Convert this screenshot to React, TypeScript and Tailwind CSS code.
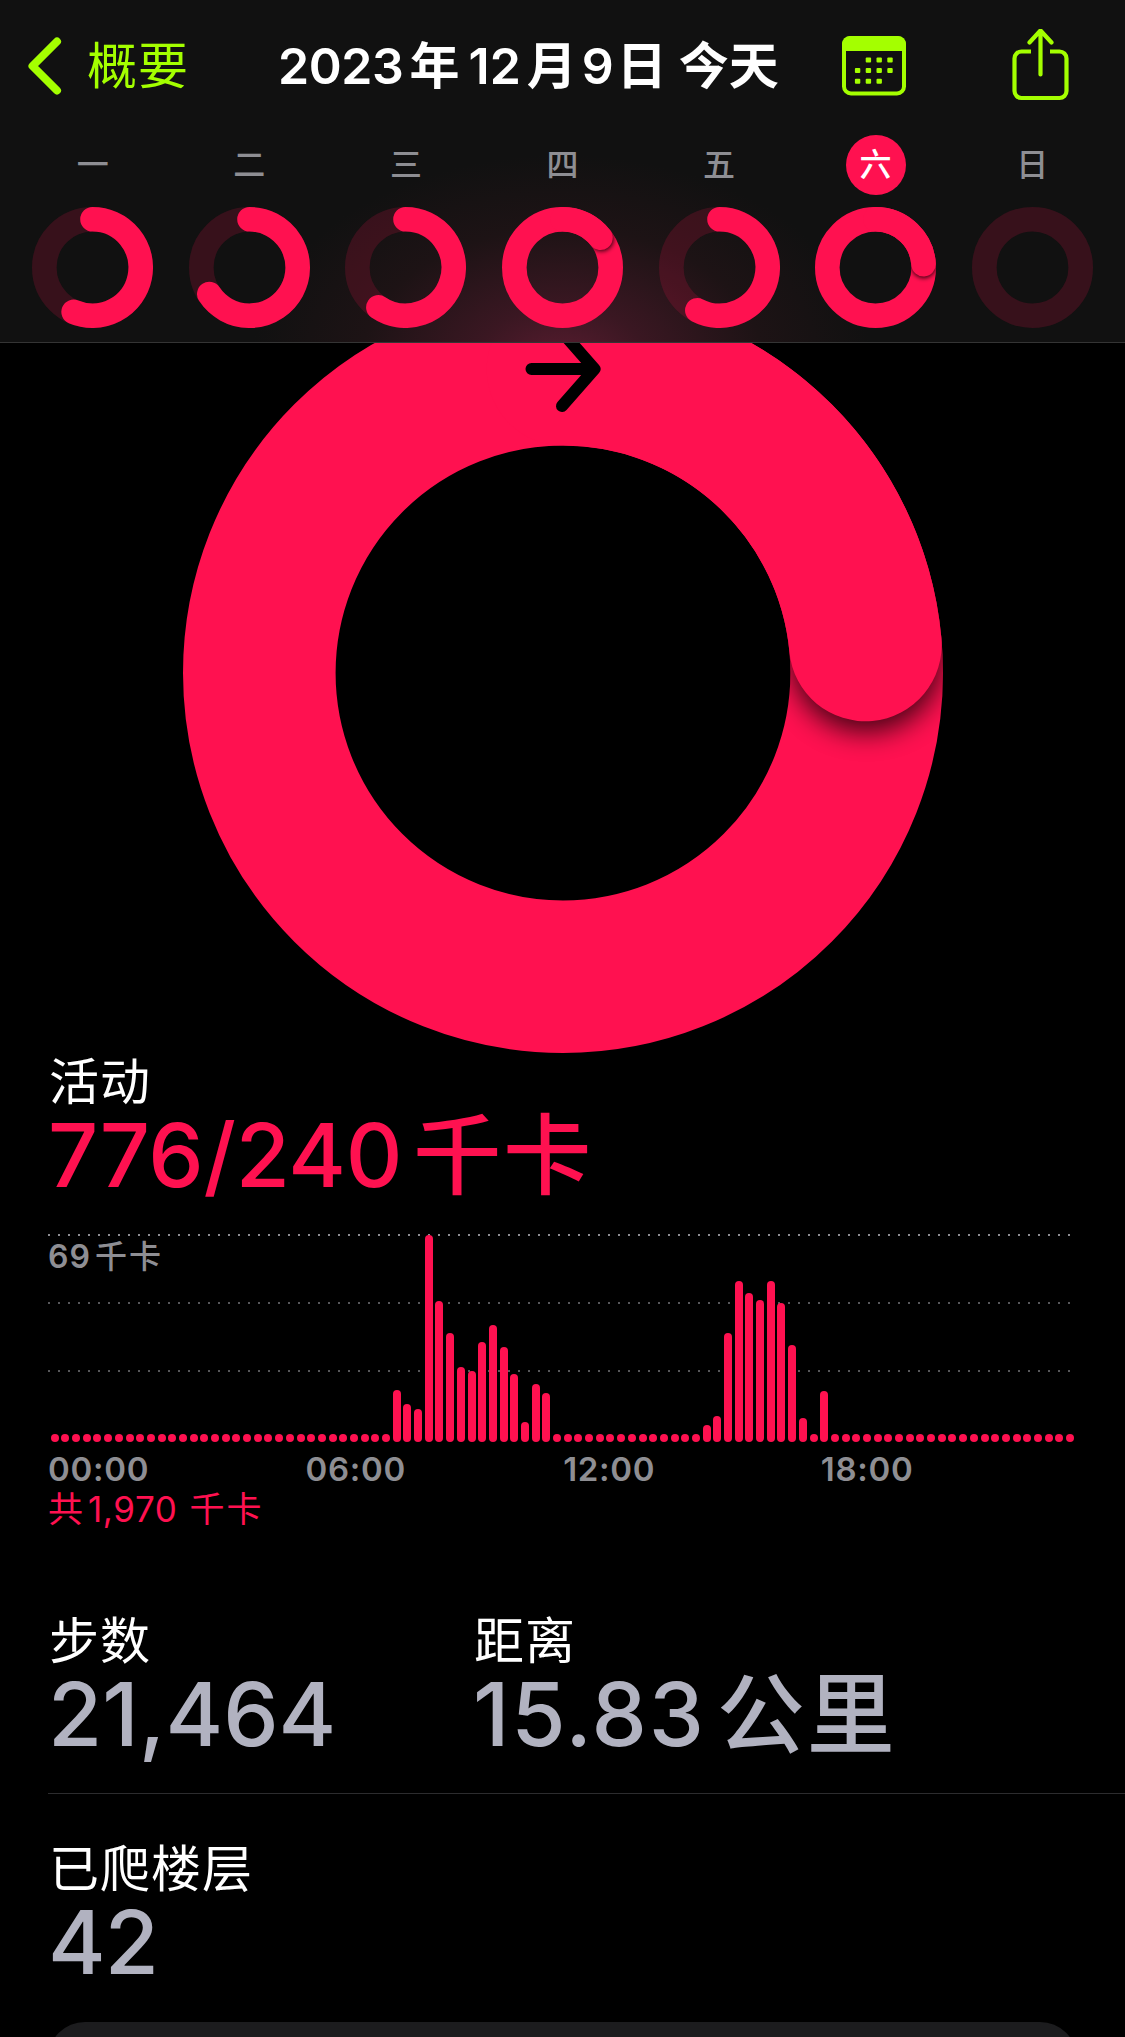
import React from 'react'

const PINK = '#ff1150'

const days = [
  { label: '一', progress: 0.564 },
  { label: '二', progress: 0.657 },
  { label: '三', progress: 0.595 },
  { label: '四', progress: 1.144 },
  { label: '五', progress: 0.576 },
  { label: '六', progress: 1.239, today: true },
  { label: '日', progress: 0 },
]

// one bar per 15 minutes, height in px
const bars: number[] = [
  ...Array(32).fill(8),
  52, 38, 33, 207, 141, 109, 75, 71, 100, 117, 95, 68, 20, 58, 49,
  ...Array(14).fill(8),
  17, 26, 109, 161, 149, 142, 161, 139, 97, 24, 8, 51,
  ...Array(23).fill(8),
]

const hours = ['00:00', '06:00', '12:00', '18:00']

type RingProps = {
  id: string
  size: number
  stroke: number
  progress: number
  className?: string
  children?: React.ReactNode
}

const Ring = ({ id, size, stroke, progress, className, children }: RingProps) => {
  const c = size / 2
  const r = (size - stroke) / 2
  const full = progress >= 1
  const angle = (progress % 1) * Math.PI * 2
  const x = c + r * Math.sin(angle)
  const y = c - r * Math.cos(angle)
  const large = angle > Math.PI ? 1 : 0

  return (
    <svg className={className} width={size} height={size} viewBox={`0 0 ${size} ${size}`} aria-hidden="true">
      <circle cx={c} cy={c} r={r} fill="none" stroke={PINK} strokeWidth={stroke} opacity={full ? 1 : 0.16} />
      {full && (
        <>
          <defs>
            <mask id={`${id}-mask`} maskUnits="userSpaceOnUse" x="0" y="0" width={size} height={size}>
              <circle cx={c} cy={c} r={r} fill="none" stroke="#fff" strokeWidth={stroke} />
            </mask>
            <filter id={`${id}-blur`} x="-50%" y="-50%" width="200%" height="200%">
              <feGaussianBlur stdDeviation={stroke * 0.09} />
            </filter>
          </defs>
          <g mask={`url(#${id}-mask)`}>
            <circle
              cx={x + Math.cos(angle) * stroke * 0.07}
              cy={y + Math.sin(angle) * stroke * 0.07}
              r={stroke / 2}
              fill="#000"
              opacity="0.75"
              filter={`url(#${id}-blur)`}
            />
          </g>
        </>
      )}
      {progress > 0 && (
        <path
          d={`M${c} ${stroke / 2}A${r} ${r} 0 ${large} 1 ${x} ${y}`}
          fill="none"
          stroke={PINK}
          strokeWidth={stroke}
          strokeLinecap="round"
        />
      )}
      {children}
    </svg>
  )
}

const CalendarIcon = () => (
  <svg width="64" height="60" viewBox="0 0 64 60" aria-hidden="true">
    <rect x="2" y="2" width="60" height="55.5" rx="7" fill="none" stroke="#a4ff00" strokeWidth="4" />
    <path d="M0 15V8a8 8 0 0 1 8-8h48a8 8 0 0 1 8 8v7z" fill="#a4ff00" />
    <g fill="#a4ff00">
      {[[26.4, 24], [37.2, 24], [48, 24], [15.6, 34.6], [26.4, 34.6], [37.2, 34.6], [48, 34.6], [15.6, 45.2], [26.4, 45.2], [37.2, 45.2]].map(([x, y]) => (
        <rect key={`${x}-${y}`} x={x - 2.7} y={y - 2.5} width="5.4" height="5" rx="1" />
      ))}
    </g>
  </svg>
)

const ShareIcon = () => (
  <svg width="58" height="74" viewBox="0 0 58 74" fill="none" stroke="#a4ff00" strokeWidth="4.2" aria-hidden="true">
    <path d="M19 22.5H9.500a7 7 0 0 0-7 7V62a7 7 0 0 0 7 7h38a7 7 0 0 0 7-7V29.500a7 7 0 0 0-7-7H38" />
    <path d="M28.500 45.500V2.500M17.500 13.500L28.500 1.500L39.500 13.500" strokeLinecap="round" strokeLinejoin="round" />
  </svg>
)

const Header = () => (
  <header className="relative z-10 h-[343px] border-b border-white/15 bg-[#111111] bg-[radial-gradient(ellipse_310px_210px_at_562px_365px,#5a1c30_0%,#3a1722_28%,#1d1315_65%,#111111_100%)]">
    <div className="flex h-[132px] items-center pl-7">
      <svg width="34" height="58" viewBox="0 0 34 58" aria-hidden="true">
        <path d="M29 4.500L4.500 29L29 53.500" fill="none" stroke="#a4ff00" strokeWidth="8" strokeLinecap="round" strokeLinejoin="round" />
      </svg>
      <span className="ml-[25px] w-[191px] text-[50px] leading-none tracking-[1px] text-[#a4ff00]">概要</span>
      <h1 className="flex w-[564px] items-center text-[50px] leading-none font-semibold whitespace-nowrap text-white">
        <span className="tracking-[-0.4px]">2023</span>
        <span className="ml-[6px]">年</span>
        <span className="ml-[9px]">12</span>
        <span className="ml-[6px]">月</span>
        <span className="ml-[5px]">9</span>
        <span className="ml-[3px]">日</span>
        <span className="ml-3">今天</span>
      </h1>
      <CalendarIcon />
      <div className="ml-[106px]">
        <ShareIcon />
      </div>
    </div>

    <div className="mx-auto grid w-[1096px] grid-cols-7">
      {days.map((day, i) => (
        <div key={day.label} className="flex flex-col items-center">
          <div
            className={
              day.today
                ? 'mt-[3px] flex h-[60px] w-[60px] items-center justify-center rounded-full bg-[#ff1150] text-[32px] leading-none font-medium text-white'
                : 'mt-[3px] flex h-[60px] w-[60px] items-center justify-center text-[32px] leading-none font-medium text-[#8e8e93]'
            }
          >
            {day.label}
          </div>
          <Ring id={`day${i}`} className="mt-[11.500px]" size={121} stroke={24.6} progress={day.progress} />
        </div>
      ))}
    </div>
  </header>
)

const Chart = () => (
  <div className="mt-[33px] w-[1026px]">
    <div className="relative h-[208px] w-full">
      <div className="absolute top-0 left-0 h-[2px] w-[1022px] bg-[repeating-linear-gradient(90deg,#8e8e93_0_2px,transparent_2px_10px)]"></div>
      <div className="absolute top-[68px] left-0 h-[2px] w-[1022px] bg-[repeating-linear-gradient(90deg,#58585b_0_2px,transparent_2px_10px)]"></div>
      <div className="absolute top-[136px] left-0 h-[2px] w-[1022px] bg-[repeating-linear-gradient(90deg,#58585b_0_2px,transparent_2px_10px)]"></div>
      <div className="absolute top-1 left-0 flex h-[37px] items-center text-[32px] leading-none font-medium text-[#8e8e93]">
        <span className="font-semibold tracking-[1px]">69</span>
        <span className="ml-1 tracking-[2px]">千卡</span>
      </div>
      <div className="relative ml-[2.700px] flex h-full w-[1023.600px] items-end justify-between">
        {bars.map((h, i) => (
          <div key={i} className="w-2 rounded-full bg-[#ff1150]" style={{ height: h }}></div>
        ))}
      </div>
    </div>
    <div className="flex h-[55px] items-center text-[33px] leading-none font-semibold tracking-[0.7px] text-[#8e8e93]">
      {hours.map((h) => (
        <span key={h} className="w-[257.600px] shrink-0">{h}</span>
      ))}
    </div>
    <div className="flex h-[25px] items-center text-[35px] leading-none text-[#ff1150]">
      <span>共</span>
      <span className="ml-[5px] tracking-[0.6px]">1,970</span>
      <span className="ml-3 tracking-[2px]">千卡</span>
    </div>
  </div>
)

type StatProps = {
  label: string
  value: string
  unit?: string
  valueClass?: string
}

const Stat = ({ label, value, unit, valueClass = 'text-[#b1b2c0]' }: StatProps) => (
  <div className="whitespace-nowrap">
    <div className="flex h-[55px] items-center pl-[1px] text-[50px] leading-none tracking-[1px] text-white">{label}</div>
    <div className={`flex h-[92px] items-center text-[88px] leading-none font-medium ${valueClass}`}>
      <span>{value}</span>
      {unit && <span className="ml-[11px] tracking-[2px]">{unit}</span>}
    </div>
  </div>
)

const App = () => {
  return (
    <div className="h-[2037px] w-[1125px] overflow-hidden bg-black font-['Inter','Noto_Sans_CJK_SC',sans-serif]">
      <Header />

      <Ring id="move" className="mx-auto -mt-[50px] block" size={760} stroke={152.6} progress={1.2353}>
        <path d="M348.500 76H411.500M379 39L411.500 76L379 113" fill="none" stroke="#000" strokeWidth="12" strokeLinecap="round" strokeLinejoin="round" />
      </Ring>

      <main className="pl-12">
        <section className="pt-[1px]">
          <Stat label="活动" value="776/240" unit="千卡" valueClass="text-[#ff1150] tracking-[-0.3px]" />
          <Chart />
        </section>

        <section className="mt-[91px] flex h-[181px] border-b border-[#2c2c2e]">
          <div className="w-[425px]">
            <Stat label="步数" value="21,464" />
          </div>
          <Stat label="距离" value="15.83" unit="公里" valueClass="text-[#b1b2c0] tracking-[1.8px]" />
        </section>

        <section className="mt-[47px]">
          <Stat label="已爬楼层" value="42" valueClass="text-[#b1b2c0] tracking-[-1px]" />
        </section>

        <div className="mt-[34px] h-20 w-[1029px] rounded-t-[37px] bg-[#1c1c1e]"></div>
      </main>
    </div>
  )
}

export default App
